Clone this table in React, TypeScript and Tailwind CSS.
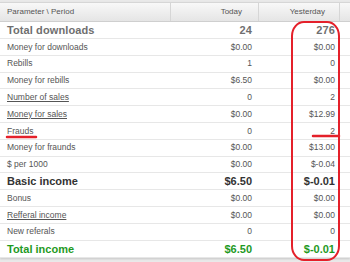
import React from 'react'

interface Row {
  label: string
  today: string
  yesterday: string
  kind?: 'big' | 'dark' | 'green'
  link?: boolean
}

const rows: Row[] = [
  { label: 'Total downloads', today: '24', yesterday: '276', kind: 'big' },
  { label: 'Money for downloads', today: '$0.00', yesterday: '$0.00' },
  { label: 'Rebills', today: '1', yesterday: '0' },
  { label: 'Money for rebills', today: '$6.50', yesterday: '$0.00' },
  { label: 'Number of sales', today: '0', yesterday: '2', link: true },
  { label: 'Money for sales', today: '$0.00', yesterday: '$12.99', link: true },
  { label: 'Frauds', today: '0', yesterday: '2' },
  { label: 'Money for fraunds', today: '$0.00', yesterday: '$13.00' },
  { label: '$ per 1000', today: '$0.00', yesterday: '$-0.04' },
  { label: 'Basic income', today: '$6.50', yesterday: '$-0.01', kind: 'dark' },
  { label: 'Bonus', today: '$0.00', yesterday: '$0.00' },
  { label: 'Refferal income', today: '$0.00', yesterday: '$0.00', link: true },
  { label: 'New referals', today: '0', yesterday: '0' },
  { label: 'Total income', today: '$6.50', yesterday: '$-0.01', kind: 'green' },
]

function textCls(kind?: Row['kind']) {
  if (kind === 'big') return 'text-[11px] font-bold text-[#6f6f6f] tracking-[0.1px]'
  if (kind === 'dark') return 'text-[11px] font-bold text-[#333]'
  if (kind === 'green') return 'text-[11px] font-bold text-[#1f9a1f]'
  return 'text-[8.5px] text-[#555]'
}

export default function App() {
  return (
    <div className="relative w-[350px] h-[262px] overflow-hidden bg-[#e9e9e9] pt-[2px] font-['Liberation_Sans',Arial,sans-serif]">
      <div className="bg-white border-t border-[#d6d6d6] shadow-[0_1px_2px_rgba(0,0,0,0.15)]">
        {/* header */}
        <div className="grid grid-cols-[170px_88px_81px_11px] h-[19px] bg-gradient-to-b from-[#f8f8f8] to-[#e5e5e5] border-b border-[#cfcfcf] text-[8px] text-[#555]">
          <div className="flex items-center pl-[7px]">Parameter \ Period</div>
          <div className="flex items-center justify-end pr-[16px] border-l border-[#d6d6d6]">Today</div>
          <div className="flex items-center justify-end pr-[14px] border-l border-[#d6d6d6]">Yesterday</div>
          <div className="border-l border-[#d6d6d6]"></div>
        </div>

        {rows.map((r) => (
          <div
            key={r.label}
            className={`grid grid-cols-[170px_88px_81px_11px] items-center border-b border-[#e7e7e7] ${r.kind ? 'h-[17px]' : 'h-[16.8px]'} ${textCls(r.kind)}`}
          >
            <div className={`pl-[7px] whitespace-nowrap ${r.link ? 'underline underline-offset-1' : ''}`}>{r.label}</div>
            <div className="text-right pr-[6px]">{r.today}</div>
            <div className="text-right pr-[4px]">{r.yesterday}</div>
            <div></div>
          </div>
        ))}
      </div>

      {/* red annotations */}
      <svg className="absolute inset-0 pointer-events-none" width="350" height="262" viewBox="0 0 350 262">
        <rect x="292" y="22" width="47" height="238" rx="12" ry="14" fill="none" stroke="#e4202a" strokeWidth="2" />
        <line x1="7" y1="137" x2="36" y2="137" stroke="#e4202a" strokeWidth="2.5" strokeLinecap="round" />
        <line x1="313" y1="136" x2="339" y2="136" stroke="#e4202a" strokeWidth="2.5" strokeLinecap="round" />
      </svg>
    </div>
  )
}
